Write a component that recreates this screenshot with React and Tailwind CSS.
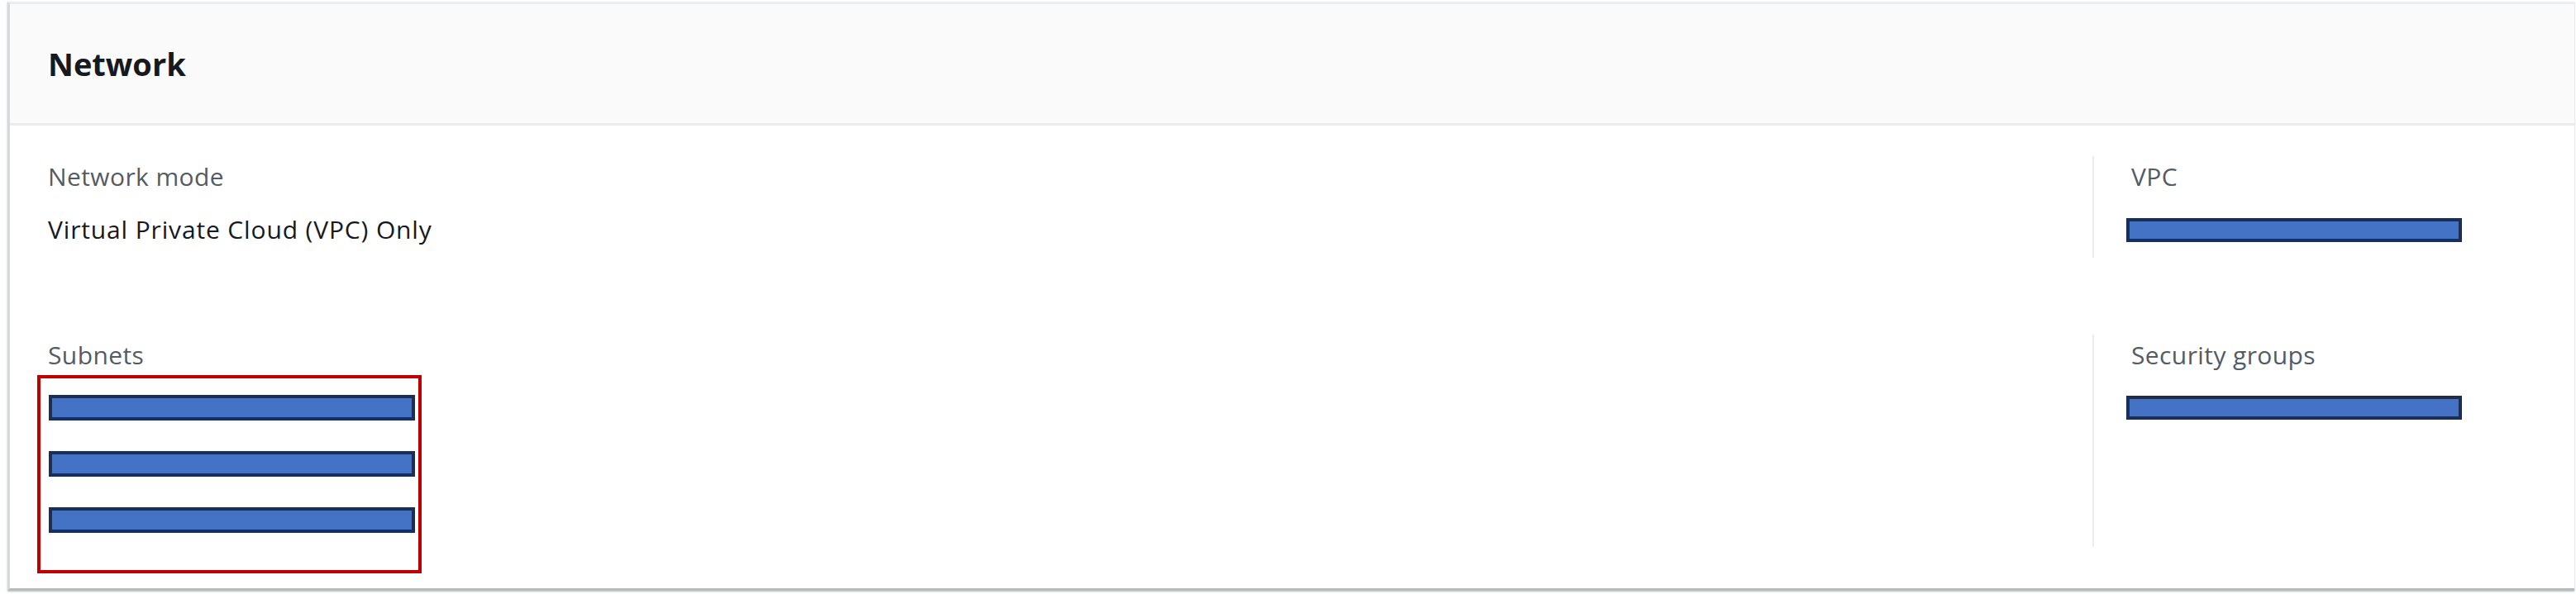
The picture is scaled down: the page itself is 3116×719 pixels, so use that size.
export default function App() {
  const font = { fontFamily: '"Open Sans", "Liberation Sans", sans-serif' };
  return (
    <div className="w-[3116px] h-[719px] bg-white overflow-hidden" style={font}>
      <div className="mt-[2px] ml-[9px] w-[3105px] bg-white border-t-[3px] border-t-[#eaeded] border-l-[3px] border-l-[#d5dbdb] border-b-[3px] border-b-[#b4bcbc] shadow-[0_1px_2px_rgba(0,28,36,0.3)]">
        <div className="bg-[#fafafa] border-b-[3px] border-[#eaeded] pl-[46px] py-[50px]">
          <h2 className="text-[38px] leading-[44px] font-bold text-[#16191f]">Network</h2>
        </div>
        <div className="grid grid-cols-[minmax(0,1fr)_583px] gap-y-[93px] pl-[46px] pt-[37px] pb-[18px]">
          <Field label="Network mode">
            <div className="mt-[24px] text-[30px] leading-[40px] font-medium tracking-[0.85px] text-[#16191f]">Virtual Private Cloud (VPC) Only</div>
          </Field>
          <SideField label="VPC" height="h-[123px]">
            <Redacted className="mt-[30px] w-[406px] h-[29px] -ml-[6px]" />
          </SideField>
          <Field label="Subnets">
            <div className="mt-[4px] -ml-[13px] w-[465px] h-[240px] border-[4px] border-[#c00000] pl-[10px] pt-[20px] flex flex-col gap-[37px]">
              <Redacted className="w-[443px] h-[31px]" />
              <Redacted className="w-[443px] h-[31px]" />
              <Redacted className="w-[443px] h-[31px]" />
            </div>
          </Field>
          <SideField label="Security groups" height="h-[257px]">
            <Redacted className="mt-[29px] w-[406px] h-[29px] -ml-[6px]" />
          </SideField>
        </div>
      </div>
    </div>
  );
}

function Field({ label, children }) {
  return (
    <div className="pt-[5px]">
      <div className="text-[30px] leading-[40px] font-medium tracking-[0.4px] text-[#545b64]">{label}</div>
      {children}
    </div>
  );
}

function SideField({ label, height, children }) {
  return (
    <div className={'self-start border-l-2 border-[#eaeded] pl-[45px] pt-[5px] ' + height}>
      <div className="text-[30px] leading-[40px] font-medium tracking-[0.4px] text-[#545b64]">{label}</div>
      {children}
    </div>
  );
}

function Redacted({ className }) {
  return <div className={'bg-[#4472c4] border-[4px] border-[#1b2f56] ' + className} />;
}
